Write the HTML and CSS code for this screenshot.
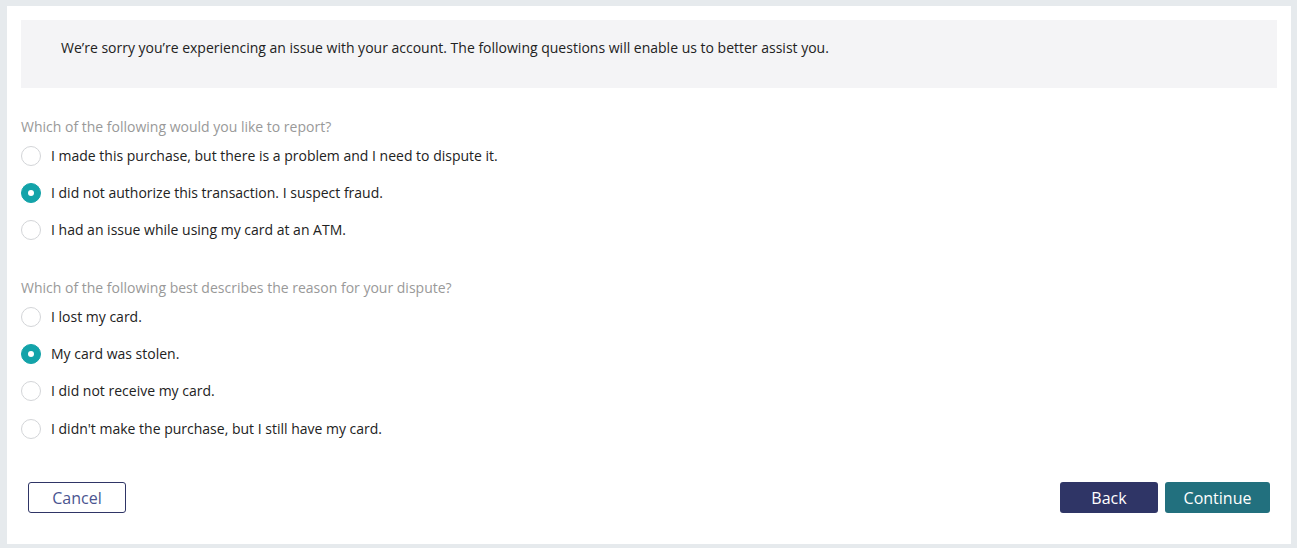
FILE: index.html
```html
<!DOCTYPE html>
<html lang="en">
<head>
    <meta charset="UTF-8">
    <title>Dispute</title>
    <link rel="stylesheet" href="styles.css">
</head>
<body>
<div class="panel">
    <div class="notice">We’re sorry you’re experiencing an issue with your account. The following questions will enable us to better assist you.</div>

    <div class="question">
        <div class="q-label">Which of the following would you like to report?</div>
        <label class="opt"><span class="radio"></span>I made this purchase, but there is a problem and I need to dispute it.</label>
        <label class="opt"><span class="radio on"></span>I did not authorize this transaction. I suspect fraud.</label>
        <label class="opt"><span class="radio"></span>I had an issue while using my card at an ATM.</label>
    </div>

    <div class="question">
        <div class="q-label">Which of the following best describes the reason for your dispute?</div>
        <label class="opt"><span class="radio"></span>I lost my card.</label>
        <label class="opt"><span class="radio on"></span>My card was stolen.</label>
        <label class="opt"><span class="radio"></span>I did not receive my card.</label>
        <label class="opt"><span class="radio"></span>I didn't make the purchase, but I still have my card.</label>
    </div>

    <div class="actions">
        <a href="javascript:;" class="btn btn-cancel">Cancel</a>
        <div class="right">
            <a href="javascript:;" class="btn btn-back">Back</a>
            <a href="javascript:;" class="btn btn-continue">Continue</a>
        </div>
    </div>
</div>
</body>
</html>
```

FILE: styles.css
```css
*{margin: 0;padding: 0;box-sizing: border-box;}
html,body{background: #e6eaed;}
body{padding: 6px 6px 4px 7px;font-family: "Open Sans", "Liberation Sans", sans-serif;font-size: 14px;color: #222;}
a{text-decoration: none;}
.panel{background: #fff;padding: 14px 14px 31px 14px;height: 538px;}
.notice{background: #f4f4f6;height: 68px;padding: 18px 0 0 40px;line-height: 20px;color: #222;}
.question{margin-top: 29px;}
.question + .question{margin-top: 30px;}
.q-label{color: #999;line-height: 20px;}
.opt{display: flex;align-items: center;height: 37px;cursor: pointer;}
.question + .question .opt:last-child{height: 38px;padding-top: 1px;}
.radio{width: 20px;height: 20px;border: 1px solid #d3d5d8;border-radius: 50%;background: #fff;margin-right: 10px;flex: none;position: relative;}
.radio.on{background: #13a3a9;border-color: #13a3a9;}
.radio.on:after{content: "";position: absolute;left: 6px;top: 6px;width: 6px;height: 6px;border-radius: 50%;background: #fff;}
.actions{display: flex;justify-content: space-between;margin-top: 35px;padding: 0 7px;}
.right{display: flex;gap: 7px;}
.btn{display: inline-flex;align-items: center;justify-content: center;height: 31px;border-radius: 3px;font-size: 16px;}
.btn-cancel{width: 98px;border: 1px solid #2f3566;color: #4a5490;}
.btn-back{width: 98px;background: #2f3566;color: #fff;}
.btn-continue{width: 105px;background: #22707e;color: #fff;}
```
